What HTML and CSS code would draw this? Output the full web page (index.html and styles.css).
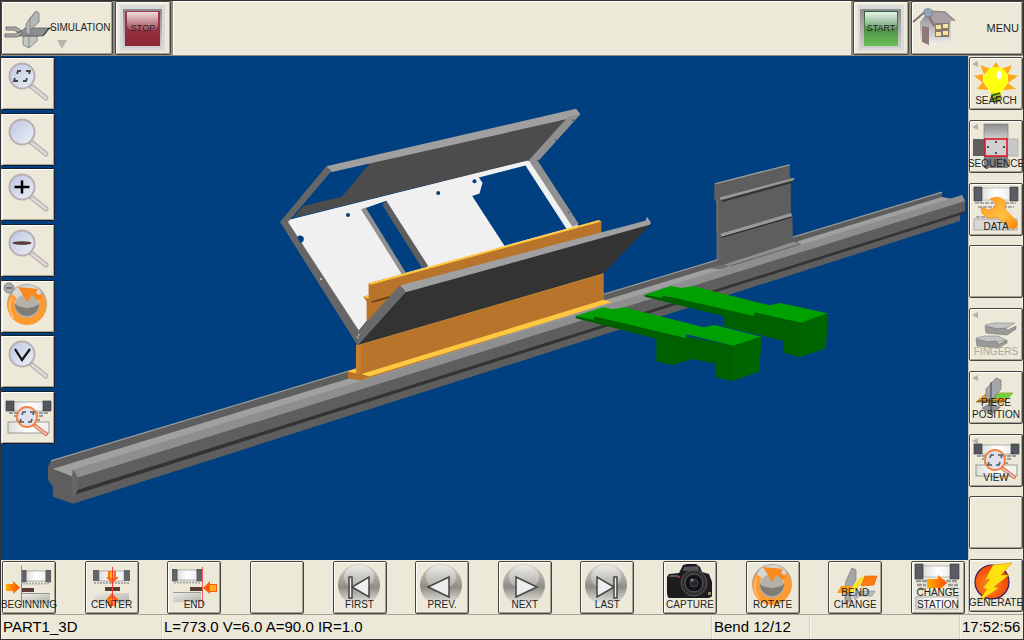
FILE: index.html
```html
<!DOCTYPE html>
<html lang="en">
<head>
    <meta charset="UTF-8">
    <title>PART1_3D - Simulation</title>
    <link rel="stylesheet" href="styles.css">
</head>
<body>

<!-- shared gradients and symbols -->
<svg class="defs" width="0" height="0" aria-hidden="true">
    <defs>
        <linearGradient id="lens" x1="0" y1="0" x2="1" y2="1">
            <stop offset="0" stop-color="#bcc6e0"/><stop offset="1" stop-color="#eef0f8"/>
        </linearGradient>
        <linearGradient id="metal" x1="0" y1="0" x2="1" y2="1">
            <stop offset="0" stop-color="#eee"/><stop offset="1" stop-color="#888"/>
        </linearGradient>
        <linearGradient id="beam" x1="0" y1="0" x2="1" y2="0">
            <stop offset="0" stop-color="#ddd"/><stop offset=".5" stop-color="#fff"/><stop offset="1" stop-color="#eee"/>
        </linearGradient>
        <linearGradient id="fire" x1="0" y1="0" x2="1" y2="0">
            <stop offset="0" stop-color="#ffb000"/><stop offset="1" stop-color="#ff4a00"/>
        </linearGradient>
        <linearGradient id="gold" x1="0" y1="0" x2="1" y2="1">
            <stop offset="0" stop-color="#ff9a20"/><stop offset=".6" stop-color="#ffc040"/><stop offset="1" stop-color="#ff8000"/>
        </linearGradient>
        <linearGradient id="ball" x1="0" y1="0" x2="0" y2="1">
            <stop offset="0" stop-color="#d8d6d0"/><stop offset=".55" stop-color="#8e8c84"/><stop offset="1" stop-color="#f4f3ee"/>
        </linearGradient>
        <linearGradient id="shine" x1="0" y1="0" x2="0" y2="1">
            <stop offset="0" stop-color="#f2f1ee"/><stop offset="1" stop-color="#b0aea6"/>
        </linearGradient>
        <linearGradient id="red" x1="0" y1="0" x2="0" y2="1">
            <stop offset="0" stop-color="#a03848"/><stop offset="1" stop-color="#8c2838"/>
        </linearGradient>
        <linearGradient id="red-top" x1="0" y1="0" x2="0" y2="1">
            <stop offset="0" stop-color="#f0dcde"/><stop offset="1" stop-color="#a84c58"/>
        </linearGradient>
        <linearGradient id="green" x1="0" y1="0" x2="0" y2="1">
            <stop offset="0" stop-color="#2c5c34"/><stop offset="1" stop-color="#6cc058"/>
        </linearGradient>
        <linearGradient id="green-top" x1="0" y1="0" x2="0" y2="1">
            <stop offset="0" stop-color="#e8f4ea"/><stop offset="1" stop-color="#6aa070"/>
        </linearGradient>
        <linearGradient id="frame" x1="0" y1="0" x2="0" y2="1">
            <stop offset="0" stop-color="#8c8c8c"/><stop offset="1" stop-color="#cfcfcf"/>
        </linearGradient>
        <linearGradient id="wall" x1="0" y1="0" x2="0" y2="1">
            <stop offset="0" stop-color="#8a8a8e"/><stop offset="1" stop-color="#f4f4f4"/>
        </linearGradient>
        <radialGradient id="sun" cx=".4" cy=".6" r=".7">
            <stop offset="0" stop-color="#ff8a20"/><stop offset="1" stop-color="#f03800"/>
        </radialGradient>
    </defs>

    <symbol id="glass" viewBox="0 0 52 51">
        <path d="M29 28 L44 40" stroke="#b3a8a8" stroke-width="5" stroke-linecap="round"/>
        <path d="M30 29 L44 40" stroke="#ddd6d4" stroke-width="3" stroke-linecap="round"/>
        <circle cx="20" cy="18" r="12.5" fill="url(#lens)" stroke="#b9aeb2" stroke-width="2"/>
    </symbol>

    <symbol id="ball-disc" viewBox="0 0 52 51">
        <circle cx="25" cy="23" r="21" fill="url(#ball)"/>
        <ellipse cx="25" cy="15" rx="15" ry="12" fill="url(#shine)" opacity=".8"/>
    </symbol>

    <symbol id="rotate" viewBox="0 0 52 51">
        <circle cx="25" cy="22" r="20" fill="#a9a8a6"/>
        <ellipse cx="25" cy="14" rx="15" ry="11" fill="#d6d6d4"/>
        <circle cx="25" cy="24" r="12" fill="#b4b2a8"/>
        <path d="M13 22 a12 12 0 0 0 24 0 a14 8 0 0 1 -24 0" fill="#7e7c74"/>
        <path d="M12 14 A16 16 0 1 0 37 13" fill="none" stroke="#ff9a30" stroke-width="7"/>
        <path d="M10 16 A17 17 0 0 0 12 36" fill="none" stroke="#ffb868" stroke-width="2"/>
        <path d="M16 5 L36 7 L34 11 L40 15 L35 18 L30 13 L25 20 Z" fill="#f98a1e"/>
    </symbol>

    <symbol id="view" viewBox="0 0 52 51">
        <rect x="11" y="10" width="31" height="9" fill="url(#beam)" stroke="#888" stroke-width=".6"/>
        <rect x="4" y="9" width="8" height="10" fill="#55575f" stroke="#333" stroke-width=".6"/>
        <rect x="41" y="9" width="8" height="10" fill="#55575f" stroke="#333" stroke-width=".6"/>
        <path d="M7 21 H46 M12 24 H42 M14 28 H38" stroke="#999" stroke-width="2" stroke-dasharray="4 1"/>
        <rect x="6" y="30" width="41" height="11" fill="url(#beam)" stroke="#888" stroke-width=".8"/>
        <path d="M32 33 L44 42" stroke="#ee6a3a" stroke-width="4" stroke-linecap="round"/>
        <path d="M33 34 L44 42" stroke="#d8c8c4" stroke-width="2" stroke-linecap="round"/>
        <circle cx="25" cy="25" r="10" fill="#dfe2ee" stroke="#f58440" stroke-width="1.8"/>
        <path d="M24 20 H21 L20 23 M19 27 L18 30 H22 M26 30 H29 L30 27 M31 23 L32 20 H28" fill="none" stroke="#555" stroke-width="1.6"/>
    </symbol>

    <symbol id="machine" viewBox="0 0 30 35">
        <rect x="5" y="1" width="20" height="10" fill="url(#beam)" stroke="#888" stroke-width=".6"/>
        <rect x="0" y="0" width="5" height="12" fill="#63656c" stroke="#444" stroke-width=".6"/>
        <rect x="25" y="0" width="5" height="12" fill="#63656c" stroke="#444" stroke-width=".6"/>
        <path d="M2 13.500 H29" stroke="#aaa" stroke-width="2" stroke-dasharray="2 1"/>
        <rect x="1" y="24" width="28" height="9" fill="url(#metal)" opacity=".6"/>
        <path d="M1 23.500 H29" stroke="#999"/>
    </symbol>
</svg>

<header class="top-bar">
    <button class="btn simulation">
        <svg class="icon" width="52" height="50" viewBox="0 0 52 50">
            <path d="M21 33 H35 V38 L27 45 L21 42 Z" fill="#c4c6c6" stroke="#777" stroke-width=".8"/>
            <path d="M27 33 V45" stroke="#888"/>
            <path d="M23 25 H48 L41 33 H14 Z" fill="#8c8e90" stroke="#555" stroke-width=".7"/>
            <path d="M24 21 L28 15 L34 8 L37 10 V19 L28 27 V32 L24 30 Z" fill="#b4b6b8" stroke="#777" stroke-width=".8"/>
            <path d="M28 15 V27 M34 9 L28 16" fill="none" stroke="#888"/>
            <path d="M41 33 L47 25 H50" fill="none" stroke="#222"/>
            <path d="M4 24 H14 L20 28 L17 30 L12 27 H4 Z M3 31 H13 L18 28 L21 30 L15 34 H3 Z" fill="#aaa" stroke="#555" stroke-width=".7"/>
        </svg>
        <span class="drop-label">SIMULATION</span>
    </button>
    <button class="btn power">
        <svg class="icon" width="54" height="52" viewBox="0 0 54 52">
            <rect x="4" y="3" width="45" height="46" fill="#d9d9d9"/>
            <rect x="7" y="7" width="39" height="39" fill="url(#frame)"/>
            <rect x="9" y="9" width="35" height="35" fill="url(#red)"/>
            <path d="M11 10 H42 V22 Q42 28 36 28 H17 Q11 28 11 22 Z" fill="url(#red-top)"/>
        </svg>
        <span class="label">STOP</span>
    </button>
    <div class="filler"></div>
    <button class="btn power">
        <svg class="icon" width="54" height="52" viewBox="0 0 54 52">
            <rect x="4" y="3" width="46" height="46" fill="#d9d9d9"/>
            <rect x="6" y="7" width="41" height="39" fill="url(#frame)"/>
            <rect x="10" y="9" width="34" height="35" fill="url(#green)"/>
            <path d="M11 10 H43 V22 Q43 27 37 27 H17 Q11 27 11 22 Z" fill="url(#green-top)"/>
        </svg>
        <span class="label">START</span>
    </button>
    <button class="btn menu">
        <svg class="icon" width="52" height="50" viewBox="0 0 52 50">
            <path d="M8 20 L15 11 L22 24 V44 L8 38 Z" fill="url(#wall)"/>
            <path d="M21 22 L38 14 L39 38 L21 44 Z" fill="url(#wall)"/>
            <path d="M14 9 L33 10 L43 18 L22 24 Z" fill="#a8a0a6"/>
            <path d="M1 20 L14 9 L22 24" fill="none" stroke="#8a6c70" stroke-width="2"/>
            <path d="M14 9 L33 10 L43 19" fill="none" stroke="#9a868a" stroke-width="1.500"/>
            <path d="M12 8 L16 6 L20 8 V14 L13 15 Z" fill="#93a4b4" stroke="#708090" stroke-width=".6"/>
            <path d="M10 24 L17 25 V43 L10 40 Z" fill="#8f787a"/>
            <rect x="23" y="21" width="14" height="14" fill="#857a70"/>
            <path d="M24 23 h5 v4 h-5 z M31 22 h5 v4 h-5 z M24 30 h5 v4 h-5 z M31 29 h5 v4 h-5 z" fill="#f8e2a0"/>
        </svg>
        <span class="label">MENU</span>
    </button>
</header>

<div class="work">
    <main class="center">
        <div class="stage">
            <!-- 3D scene -->
            <svg class="scene" viewBox="0 56 968 504" role="img" aria-label="PART1_3D">
                <!-- bed -->
                <path d="M50 461 L942 192 V199 L952 199 L962 195 L965 200 V211 L960 215 V221 L72 504 L52 497 V487 L47 480 V467 Z" fill="#5e5e5e"/>
                <path d="M50 461 L942 192" stroke="#999" stroke-width="1.200"/>
                <path d="M52 469 L942 197 L952 199 L960 197 L72 477 Z" fill="#a0a0a0"/>
                <path d="M72 470 L962 195 L965 201 L76 478 Z" fill="#8e8e8e"/>
                <path d="M77 490 L965 211 L962 214.500 L75 494.500 Z" fill="#333"/>
                <path d="M72 469 L77 478 V489 L74 494 L71 500 V477 Z" fill="#666"/>

                <!-- back die -->
                <g transform="translate(560 150) scale(.33333)">
                    <path d="M462 100 L685 43 L689 45 V82 L703 85 L692 98 V188 L697 202 L698 262 L720 282 L500 350 L455 350 L472 335 V250 L468 245 V155 L462 148 Z" fill="#5e5e5e"/>
                    <path d="M464 101 L688 44" stroke="#999" stroke-width="4"/>
                    <path d="M478 142 L702 83 L700 90 L482 150 Z" fill="#999"/>
                    <path d="M485 153 L697 95" stroke="#333" stroke-width="6"/>
                    <path d="M480 251 L692 189 L696 198 L484 260 Z" fill="#999"/>
                    <path d="M484 262 L694 201" stroke="#222" stroke-width="3"/>
                    <path d="M472 150 V330" stroke="#6e6e6e" stroke-width="6"/>
                    <path d="M488 345 L700 275 L722 281 L510 348 Z" fill="#8e8e8e"/>
                    <path d="M510 348 L722 282" stroke="#444" stroke-width="2"/>
                    <path d="M440 355 L480 345 L505 350 L480 358 Z" fill="#707070"/>
                </g>

                <!-- bent sheet, tooling and front flange -->
                <g transform="translate(270 100) scale(.33333)">
                    <path fill-rule="evenodd" fill="#f0f0f0" d="M52 360 L770 180 L800 190 L925 380 L700 440 L400 525 L258 700 L50 372 Z M272 328 L400 520 L470 500 L347 302 Z M625 232 L765 196 L888 386 L702 437 L605 288 L627 280 L636 248 Z"/>
                    <path d="M272 328 L285 322 L405 517 L395 525 Z" fill="#909090"/>
                    <path d="M335 315 L347 302 L473 498 L455 505 Z" fill="#5e5e5e"/>
                    <path d="M300 188 L893 50 L775 180 L68 353 L98 318 L213 290 Z" fill="#4c4c4c"/>
                    <path d="M167 198 L917 26 L930 42 L920 50 L180 216 Z" fill="#a0a0a0"/>
                    <path d="M893 50 L930 42 L803 183 L925 372 L906 380 L775 180 Z" fill="#909090"/>
                    <path d="M167 198 L183 212 L52 366 L270 700 L262 738 L28 366 Z" fill="#666"/>
                    <path d="M80 410 a11 11 0 1 1 8 18 z" fill="#004080"/>
                    <g fill="#004080">
                        <circle cx="232" cy="345" r="6"/>
                        <circle cx="503" cy="279" r="6"/>
                        <circle cx="612" cy="243" r="6"/>
                    </g>
                    <g fill="#465468">
                        <circle cx="855" cy="120" r="3"/>
                        <circle cx="908" cy="60" r="3"/>
                        <circle cx="803" cy="181" r="3"/>
                        <circle cx="894" cy="337" r="3"/>
                    </g>
                    <circle cx="151" cy="537" r="3" fill="#ddd"/>

                    <path d="M294 550 L993 362 V400 L400 560 L288 665 V604 L278 590 L294 586 Z" fill="#b8742a"/>
                    <path d="M294 550 L985 360 L993 364 L300 554 Z" fill="#ffc840"/>
                    <path d="M278 590 L294 586 V596 Z" fill="#ffc840"/>
                    <path d="M303 604 L370 584 L350 596 L303 609 Z" fill="#6a4010"/>

                    <path d="M256 737 L1000 520 V600 L1025 605 L270 842 L232 835 V815 L256 808 Z" fill="#b8742a"/>
                    <path d="M256 737 L1000 520" stroke="#e0a030" stroke-width="3"/>
                    <path d="M272 822 L1000 599 L1025 606 L295 830 Z" fill="#ffc840"/>
                    <path d="M232 815 L256 806 V820 Z" fill="#ffc840"/>
                    <path d="M256 740 H271 V820 L256 824 Z" fill="#c88030"/>

                    <path d="M262 735 L410 572 L1142 372 L1000 520 Z" fill="#333"/>
                    <path d="M390 556 L1125 362 L1130 350 L1142 368 L1138 374 L405 577 Z" fill="#a0a0a0"/>
                    <path d="M388 556 L405 577 L262 736 L258 698 Z" fill="#6a6a6a"/>
                    <path d="M258 710 l6 4 M262 703 l5 3" stroke="#ddd" stroke-width="3"/>
                </g>

                <!-- back gauge fingers -->
                <g transform="translate(560 150) scale(.33333)">
                    <path d="M253 434 L330 440 L583 487 L722 517 L802 490 L797 594 L717 622 L670 608 V572 L600 556 L492 530 V499 L253 440 Z" fill="#006000"/>
                    <path d="M253 434 L332 408 L362 414 L398 409 L628 466 L660 459 L802 490 L724 518 L583 487 L581 498 L308 436 L306 444 Z" fill="#00a000"/>
                    <path d="M724 518 L802 491 L797 594 L717 622 Z" fill="#006600"/>
                    <path d="M46 498 L130 500 L380 560 L520 586 L603 560 L597 664 L515 693 L467 681 V641 L397 627 L335 646 L288 634 V566 L46 505 Z" fill="#006000"/>
                    <path d="M46 498 L128 472 L156 478 L192 472 L430 532 L462 525 L603 560 L520 587 L379 553 L376 564 L101 499 L100 509 Z" fill="#00a000"/>
                    <path d="M520 587 L603 561 L597 664 L515 693 Z" fill="#006600"/>
                </g>
            </svg>

            <nav class="zoom-bar">
                <button class="btn tool" aria-label="Zoom fit">
                    <svg class="icon" viewBox="0 0 52 51"><use href="#glass"/><path d="M19 13 H16 L15 16 M13 20 L12 23 H16 M21 23 H24 L25 20 M27 16 L28 13 H24" fill="none" stroke="#444" stroke-width="1.800"/></svg>
                </button>
                <button class="btn tool" aria-label="Zoom window">
                    <svg class="icon" viewBox="0 0 52 51"><use href="#glass"/></svg>
                </button>
                <button class="btn tool" aria-label="Zoom in">
                    <svg class="icon" viewBox="0 0 52 51"><use href="#glass"/><path d="M12.500 18 H27.500 M20 11.500 V24.500" stroke="#000" stroke-width="2.500"/></svg>
                </button>
                <button class="btn tool" aria-label="Zoom out">
                    <svg class="icon" viewBox="0 0 52 51"><use href="#glass"/><ellipse cx="20" cy="18" rx="9.500" ry="1.800" fill="#5a3a3a"/></svg>
                </button>
                <button class="btn tool" aria-label="Rotate view">
                    <svg class="icon" viewBox="0 0 52 51"><use href="#rotate" y="1"/><circle cx="7" cy="7" r="5" fill="#aaa" stroke="#888"/><path d="M4 7 H10" stroke="#666" stroke-width="1.500"/></svg>
                </button>
                <button class="btn tool" aria-label="Views">
                    <svg class="icon" viewBox="0 0 52 51"><use href="#glass"/><path d="M13 13 L20 24 L28 13" fill="none" stroke="#111" stroke-width="2.200"/></svg>
                </button>
                <button class="btn tool" aria-label="Machine view">
                    <svg class="icon" viewBox="0 0 52 51"><use href="#view"/></svg>
                </button>
            </nav>
        </div>

        <div class="step-bar">
            <button class="btn tool">
                <svg class="icon" viewBox="0 0 52 51">
                    <use href="#machine" x="18" y="8" width="30" height="35"/>
                    <rect x="18" y="26" width="13" height="4" fill="#5c3c34"/>
                    <path d="M18.500 4 V43" stroke="#f06060"/>
                    <path d="M3 22 H10 V19 L17 25.500 L10 32 V29 H3 Z" fill="url(#fire)"/>
                </svg>
                <span class="label">BEGINNING</span>
            </button>
            <button class="btn tool">
                <svg class="icon" viewBox="0 0 52 51">
                    <rect x="13" y="9" width="25" height="10" fill="url(#beam)" stroke="#888" stroke-width=".6"/>
                    <path d="M7 8 h6 v11 h-6 z M38 8 h6 v11 h-6 z" fill="#63656c"/>
                    <path d="M8 21 H44" stroke="#aaa" stroke-width="2" stroke-dasharray="2 1"/>
                    <rect x="8" y="31" width="35" height="10" fill="url(#metal)" opacity=".6"/>
                    <rect x="19" y="25" width="15" height="4" fill="#5c3c34"/>
                    <path d="M22 9 H30 V15 H33 L26 22 L20 15 H22 Z M22 44 H30 V38 H33 L26 31 L20 38 H22 Z" fill="#ff6a10"/>
                    <path d="M24 10 H28 V16 H24 Z M24 43 H28 V37 H24 Z" fill="#ffb820"/>
                    <path d="M26.500 5 V43" stroke="#f04040"/>
                </svg>
                <span class="label">CENTER</span>
            </button>
            <button class="btn tool">
                <svg class="icon" viewBox="0 0 52 51">
                    <use href="#machine" x="4" y="7" width="30" height="35"/>
                    <rect x="22" y="25" width="12" height="4" fill="#5c3c34"/>
                    <path d="M34.500 5 V43" stroke="#f06060"/>
                    <path d="M49 22 H42 V19 L35 26 L42 32 V30 H49 Z" fill="#ff5a10"/>
                    <path d="M48 23 H42 V29 H48 Z" fill="#ffb020"/>
                </svg>
                <span class="label">END</span>
            </button>
            <button class="btn tool" aria-label="Empty"></button>
            <button class="btn tool">
                <svg class="icon" viewBox="0 0 52 51"><use href="#ball-disc"/><path d="M15 15 H18 V36 H15 Z M35 15 V35 L18 25 Z" fill="#eee" stroke="#444" stroke-width="1.500"/></svg>
                <span class="label">FIRST</span>
            </button>
            <button class="btn tool">
                <svg class="icon" viewBox="0 0 52 51"><use href="#ball-disc"/><path d="M33 15 V35 L12 25 Z" fill="#eee" stroke="#444" stroke-width="1.500"/></svg>
                <span class="label">PREV.</span>
            </button>
            <button class="btn tool">
                <svg class="icon" viewBox="0 0 52 51"><use href="#ball-disc"/><path d="M17 15 V35 L38 25 Z" fill="#eee" stroke="#444" stroke-width="1.500"/></svg>
                <span class="label">NEXT</span>
            </button>
            <button class="btn tool">
                <svg class="icon" viewBox="0 0 52 51"><use href="#ball-disc"/><path d="M33 15 H36 V36 H33 Z M16 15 V35 L33 25 Z" fill="#eee" stroke="#444" stroke-width="1.500"/></svg>
                <span class="label">LAST</span>
            </button>
            <button class="btn tool">
                <svg class="icon" viewBox="0 0 52 51">
                    <path d="M3 15 L5 12 L15 11 L19 3 L23 2 H32 L36 5 L38 10 L45 12 L48 20 V34 Q47 36 42 36 H5 Q3 35 3 30 Z" fill="#1c1c1e"/>
                    <path d="M20 5 L34 4 L35 8 L19 9 Z M6 13 H14 V15 H5 Z" fill="#55555a"/>
                    <circle cx="30" cy="21" r="13" fill="#303034" stroke="#555"/>
                    <circle cx="30" cy="21" r="9" fill="#141416" stroke="#606068"/>
                    <circle cx="30" cy="21" r="4" fill="#26262e" stroke="#444"/>
                    <circle cx="15" cy="15" r="1" fill="#d33"/>
                    <circle cx="28" cy="18" r="1.500" fill="#889"/>
                    <rect x="44" y="30" width="3" height="3" fill="#998866"/>
                </svg>
                <span class="label">CAPTURE</span>
            </button>
            <button class="btn tool">
                <svg class="icon" viewBox="0 0 52 51"><use href="#rotate"/></svg>
                <span class="label">ROTATE</span>
            </button>
            <button class="btn tool">
                <svg class="icon" viewBox="0 0 52 51">
                    <path d="M17 19 L23 6 L27 8 V18 L22 26 V38 L16 42 V24 Z" fill="#a4a6a8" stroke="#777" stroke-width=".7"/>
                    <path d="M8 31 L12 24 H23 L19 31 Z" fill="#ff9a10"/>
                    <path d="M19 30 L24 24 L32 15 H36 L29 26 L24 30 Z" fill="#ffe020"/>
                    <path d="M32 24 L36 14 H48 L45 23 Z" fill="#ff7a10" stroke="#e05a00" stroke-width=".6"/>
                    <path d="M24 33 L32 29 H46 L43 34 H30 L26 38 Z" fill="#bbb" stroke="#888" stroke-width=".6"/>
                </svg>
                <span class="label">BEND<br>CHANGE</span>
            </button>
            <button class="btn tool">
                <svg class="icon" viewBox="0 0 52 51">
                    <rect x="11" y="4" width="28" height="11" fill="url(#beam)" stroke="#999" stroke-width=".6"/>
                    <path d="M3 2 h8 v15 h-8 z M38 2 h9 v15 h-9 z" fill="#5b5d65" stroke="#333" stroke-width=".6"/>
                    <path d="M4 19 H46 M5 23 H14 M36 23 H46 M7 27 H13 M38 27 H44" stroke="#999" stroke-width="2.500" stroke-dasharray="5 1"/>
                    <rect x="4" y="35" width="42" height="12" fill="url(#beam)" stroke="#888" stroke-width=".6"/>
                    <path d="M15 17 H26 V13 L35 21 L26 29 V26 H15 Z" fill="url(#fire)"/>
                </svg>
                <span class="label">CHANGE<br>STATION</span>
            </button>
        </div>
    </main>

    <aside class="side-bar">
        <button class="btn tool more">
            <svg class="icon" viewBox="0 0 52 51">
                <path d="M21 12 L26 4 L31 12 Z M14 16 L10 7 L21 11 Z M13 16 L4 18 L13 25 Z M13 24 L7 31 L19 32 Z M31 11 L42 7 L38 16 Z M38 16 L48 18 L38 25 Z M38 25 L46 31 L33 32 Z" fill="#ffa818"/>
                <path d="M26 9 a12 12 0 0 1 8 21 L31 36 H21 L18 30 a12 12 0 0 1 8 -21" fill="#ffff10"/>
                <ellipse cx="29" cy="17" rx="2.500" ry="4" fill="#fff"/>
                <path d="M21 35 H31 L30 43 L26 45 L22 43 Z" fill="#b8c810"/>
                <path d="M21 38 L30 35 M21 42 L31 38 M23 44 L30 42" stroke="#206020" stroke-width="1.500"/>
            </svg>
            <span class="label">SEARCH</span>
        </button>
        <button class="btn tool more">
            <svg class="icon" viewBox="0 0 52 51">
                <rect x="14" y="3" width="24" height="15" fill="url(#frame)" stroke="#777" stroke-width=".6"/>
                <rect x="3" y="18" width="12" height="17" fill="#606060"/>
                <rect x="37" y="18" width="11" height="17" fill="#c8c8c8" stroke="#999" stroke-width=".6"/>
                <rect x="14" y="35" width="24" height="12" fill="#808080"/>
                <rect x="15" y="18" width="22" height="17" fill="#d0d0d0" stroke="#e01020" stroke-width="1.500"/>
                <path d="M26 20 V22 M26 31 V33 M17 26 H19 M33 26 H35" stroke="#222" stroke-width="1.500"/>
            </svg>
            <span class="label">SEQUENCE</span>
        </button>
        <button class="btn tool more">
            <svg class="icon" viewBox="0 0 52 51">
                <rect x="11" y="4" width="29" height="12" fill="url(#beam)" stroke="#aaa" stroke-width=".6"/>
                <path d="M4 3 h8 v14 h-8 z M40 3 h8 v14 h-8 z" fill="#5b5d65" stroke="#333" stroke-width=".6"/>
                <path d="M5 19 H46 M8 23 H44 M6 33 H40" stroke="#aaa" stroke-width="2" stroke-dasharray="4 1"/>
                <rect x="4" y="35" width="43" height="11" fill="#d8d8d8" stroke="#888" stroke-width=".6"/>
                <path d="M20 15 Q28 11 34 16 Q37 20 35 25 L47 38 Q48 44 43 45 Q40 45 38 43 L27 33 Q18 37 12 29 L11 23 L18 26 L24 24 L26 19 Z" fill="url(#gold)" stroke="#f08000" stroke-width=".6"/>
            </svg>
            <span class="label">DATA</span>
        </button>
        <button class="btn tool" aria-label="Empty"></button>
        <button class="btn tool more" disabled>
            <svg class="icon" viewBox="0 0 52 51">
                <path d="M15 16 L24 14 H45 L35 20 H26 Z" fill="#c4c4c4" stroke="#888" stroke-width=".6"/>
                <path d="M15 17 L27 20 L35 19 L38 21 L46 17 V20 L37 26 L16 24 Z" fill="#999" stroke="#777" stroke-width=".6"/>
                <path d="M6 29 L14 27 H28 L36 31 L28 33 H17 Z" fill="#c4c4c4" stroke="#888" stroke-width=".6"/>
                <path d="M6 30 L18 33 L26 32 L29 35 L37 31 V34 L28 39 L7 37 Z" fill="#999" stroke="#777" stroke-width=".6"/>
            </svg>
            <span class="label">FINGERS</span>
        </button>
        <button class="btn tool more">
            <svg class="icon" viewBox="0 0 52 51">
                <path d="M6 30 L17 21 H43 L33 31 Z" fill="#ff9a10" stroke="#a06000" stroke-width=".6"/>
                <path d="M25 21 H43 L39 26 H22 Z" fill="#70d040"/>
                <path d="M16 17 L26 6 L31 8 V17 L21 29 L16 27 Z" fill="#a4a6a8" stroke="#777" stroke-width=".7"/>
                <path d="M11 36 L20 31 L31 35 L22 43 Z" fill="#909090"/>
                <path d="M21 10 V42 M8 29 H36" stroke="#444" stroke-width="1"/>
            </svg>
            <span class="label">PIECE<br>POSITION</span>
        </button>
        <button class="btn tool more">
            <svg class="icon" viewBox="0 0 52 51"><use href="#view"/></svg>
            <span class="label">VIEW</span>
        </button>
        <button class="btn tool" aria-label="Empty"></button>
        <button class="btn tool">
            <svg class="icon" viewBox="0 0 52 51">
                <circle cx="22" cy="22" r="17" fill="url(#sun)" stroke="#30206a" stroke-width="1.200"/>
                <path d="M23 5 L42 3 L31 15 L39 15 L24 27 L29 28 L8 42 L17 29 L13 28 L20 19 L15 20 Z" fill="#ffe010" stroke="#e08a00" stroke-width=".6"/>
            </svg>
            <span class="label">GENERATE</span>
        </button>
    </aside>
</div>

<footer class="status-bar">
    <div class="cell name">PART1_3D</div>
    <div class="cell coords">L=773.0 V=6.0 A=90.0 IR=1.0</div>
    <div class="cell bend">Bend 12/12</div>
    <div class="cell spare"></div>
    <div class="cell clock">17:52:56</div>
</footer>

</body>
</html>
```

FILE: styles.css
```css
* {
    box-sizing: border-box;
}

body {
    margin: 0;
    min-height: 100vh;
    display: flex;
    flex-direction: column;
    background: #ece9d8;
    color: #000;
    font-family: "Liberation Sans", Arial, sans-serif;
    border: 1px solid #333;
}

.defs {
    position: absolute;
}

/* buttons */

.btn {
    display: grid;
    flex: none;
    margin: 0;
    padding: 0;
    border: 1px solid #45443f;
    border-radius: 2px;
    background: #ece9d8;
    box-shadow: inset 1px 1px 0 #fff, inset -1px -1px 0 #a5a294;
    color: #222;
    font-family: inherit;
    font-size: 10px;
    line-height: 12px;
}

.btn > * {
    grid-area: 1 / 1;
}

.icon {
    display: block;
}

.label {
    white-space: nowrap;
    text-align: center;
}

.tool {
    grid-template-columns: 100%;
    width: 54px;
    height: 53px;
}

.tool .icon {
    width: 52px;
    height: 51px;
}

.tool .label {
    place-self: end center;
    padding-bottom: 2px;
}

.more::before {
    content: "";
    grid-area: 1 / 1;
    place-self: start;
    margin: 3px 2px;
    border: 3px solid transparent;
    border-right: 6px solid #b4b2a8;
    border-left: 0;
}

.btn:disabled .label {
    color: #aaa89c;
}

/* top bar */

.top-bar {
    display: flex;
    gap: 2px;
    height: 55px;
    padding-bottom: 1px;
    background: #8d8b80;
}

.simulation {
    width: 112px;
    grid-template-columns: 48px 1fr;
    align-items: center;
    text-align: left;
}

.simulation .drop-label {
    grid-area: 1 / 2;
    position: relative;
}

.drop-label::after {
    content: "";
    position: absolute;
    top: 18px;
    left: 7px;
    border: 5px solid transparent;
    border-top: 9px solid #b8b6ac;
    border-bottom: 0;
}

.power {
    width: 56px;
    font-size: 9px;
}

.power .label {
    place-self: center;
}

.filler {
    flex: 1;
    background: #ece9d8;
    box-shadow: inset 1px 1px 0 #fff;
}

.menu {
    width: 112px;
    font-size: 11px;
}

.menu .label {
    place-self: center end;
    padding-right: 3px;
}

/* work area */

.work {
    flex: 1;
    display: flex;
}

.center {
    flex: 1;
    display: flex;
    flex-direction: column;
}

.stage {
    position: relative;
    flex: 1;
    background: #004080;
}

.scene {
    display: block;
    width: 100%;
    height: 100%;
}

.zoom-bar {
    position: absolute;
    top: 1px;
    left: 0;
    height: 387px;
    display: flex;
    flex-direction: column;
    justify-content: space-between;
}

.zoom-bar .btn {
    border-color: #14202e;
    border-left-color: #ece9d8;
}

.step-bar {
    display: flex;
    justify-content: space-between;
    height: 54px;
    padding: 1px 3px 0 1px;
}

.side-bar {
    display: flex;
    flex-direction: column;
    justify-content: space-between;
    padding: 1px 0 2px;
    border-left: 1px solid #c8c5b6;
}

/* status bar */

.status-bar {
    display: flex;
    height: 25px;
    border-top: 1px solid #a5a294;
    font-size: 15px;
    line-height: 24px;
}

.cell {
    padding-left: 2px;
    border-right: 1px solid #d4d1c2;
    box-shadow: inset 1px 0 0 #f8f6ec;
    white-space: nowrap;
}

.name {
    width: 161px;
}

.coords {
    flex: 1;
}

.bend {
    width: 98px;
}

.spare {
    width: 150px;
}

.clock {
    width: 63px;
    border-right: 0;
}
```
